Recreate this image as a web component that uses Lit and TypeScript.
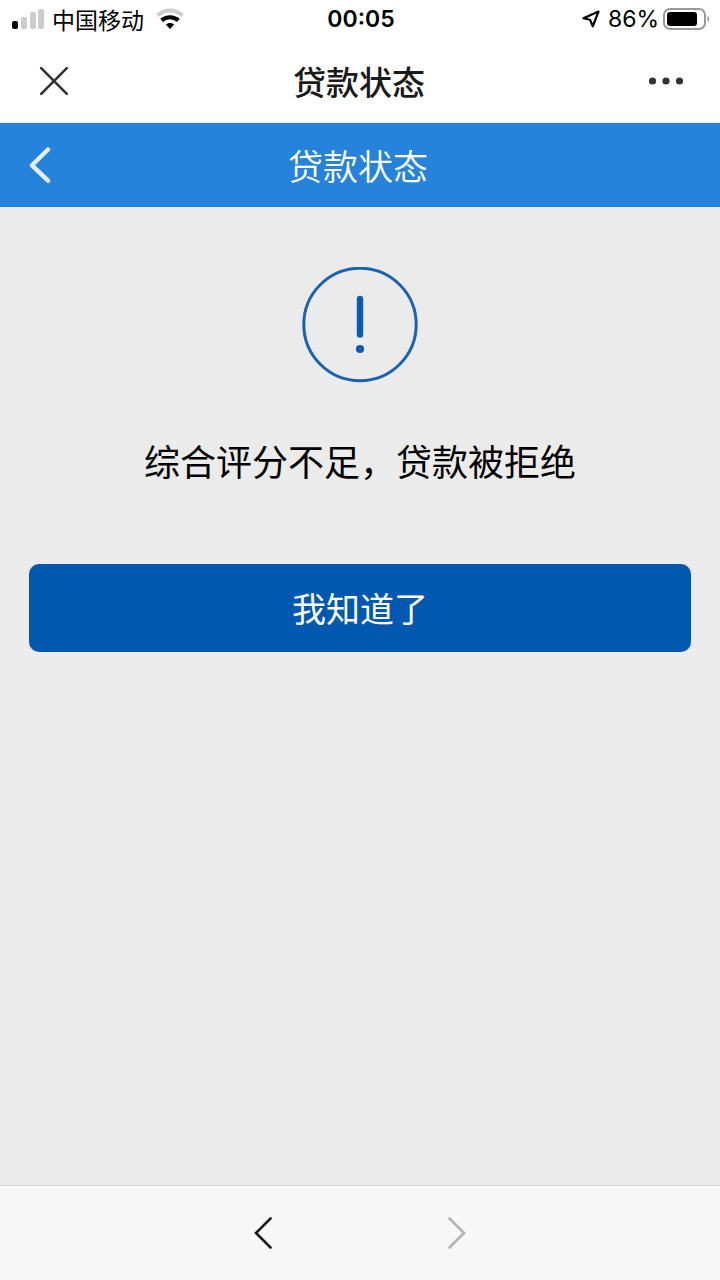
import { LitElement, html, css } from "lit";
import { customElement, property } from "lit/decorators.js";

@customElement("status-bar")
class StatusBar extends LitElement {
  @property() carrier = "";
  @property() time = "";
  @property() battery = "";

  static styles = css`
    :host {
      display: grid;
      grid-template-columns: 1fr auto 1fr;
      align-items: center;
      height: 38px;
      padding: 0 10px 0 12px;
      background: #fff;
      color: #000;
      font-size: 23px;
      line-height: 32px;
    }
    .side {
      display: flex;
      align-items: center;
    }
    .right {
      justify-content: flex-end;
    }
    svg {
      display: block;
      flex: none;
    }
    .carrier {
      margin: 0 12px 0 8px;
    }
    .time {
      font-family: Inter, sans-serif;
      font-weight: 600;
    }
    .level {
      font-family: Inter, sans-serif;
      margin: 0 4px 0 8px;
    }
  `;

  render() {
    return html`
      <div class="side">
        <svg width="32" height="22" viewBox="0 0 32 22" aria-hidden="true">
          <rect x="0" y="13" width="6" height="8" rx="2" fill="#000" />
          <rect x="9" y="9" width="6" height="12" rx="2" fill="#ccc" />
          <rect x="18" y="4" width="6" height="17" rx="2" fill="#ccc" />
          <rect x="26" y="1" width="6" height="20" rx="2" fill="#ccc" />
        </svg>
        <span class="carrier">${this.carrier}</span>
        <svg width="28" height="22" viewBox="0 0 28 22" fill="none" aria-hidden="true">
          <path d="M1.5 7.6C8.7 .8 19.3 .8 26.5 7.6" stroke="#ccc" stroke-width="4" />
          <path d="M5.6 12.4C10.5 8.2 17.5 8.2 22.4 12.4" stroke="#000" stroke-width="4.2" />
          <path d="M9.8 16.6C12.3 14.4 15.7 14.4 18.2 16.6L14 21Z" fill="#000" />
        </svg>
      </div>
      <span class="time">${this.time}</span>
      <div class="side right">
        <svg width="18" height="20" viewBox="0 0 18 20" fill="none" aria-hidden="true">
          <path d="M16.5 2.5L1.5 9.3L8 10.8L10.8 17.3Z" stroke="#000" stroke-width="2.2" stroke-linejoin="round" />
        </svg>
        <span class="level">${this.battery}</span>
        <svg width="47" height="22" viewBox="0 0 47 22" aria-hidden="true">
          <rect x="1" y="1" width="41" height="20" rx="6" fill="none" stroke="#999" stroke-width="2" />
          <rect x="4" y="4" width="30" height="14" rx="3" fill="#000" />
          <path d="M44.5 8C46.8 9 46.8 13 44.5 14Z" fill="#999" />
        </svg>
      </div>
    `;
  }
}

@customElement("app-root")
class AppRoot extends LitElement {
  static styles = css`
    :host {
      display: flex;
      flex-direction: column;
      min-height: 100vh;
      background: #ebebeb;
      font-family: "Noto Sans CJK SC", sans-serif;
    }
    button {
      display: flex;
      align-items: center;
      justify-content: center;
      margin: 0;
      padding: 0;
      border: 0;
      background: none;
      color: inherit;
      font: inherit;
      cursor: pointer;
    }
    svg {
      display: block;
    }
    h1,
    h2,
    p {
      margin: 0;
      text-align: center;
    }
    .bar {
      display: grid;
      grid-template-columns: 80px 1fr 84px;
      align-items: center;
    }
    .bar button {
      height: 80px;
    }
    .window {
      height: 85px;
      padding: 0 12px 0 14px;
      background: #fff;
      color: #1a1a1a;
    }
    .window h1 {
      font-size: 33px;
      font-weight: 500;
      line-height: 48px;
    }
    .page {
      height: 84px;
      background: #2683db;
      color: #fff;
    }
    .page h2 {
      font-size: 35px;
      font-weight: 350;
      line-height: 48px;
    }
    main {
      display: flex;
      flex: 1;
      flex-direction: column;
      align-items: center;
      padding: 60px 29px 48px;
    }
    .message {
      margin: 50px 0 77px;
      color: #000;
      font-size: 36px;
      line-height: 54px;
    }
    main .confirm {
      width: 100%;
      height: 88px;
      padding-bottom: 2px;
      border-radius: 10px;
      background: #0058b1;
      color: #fff;
      font-size: 34px;
    }
    .toolbar {
      display: flex;
      justify-content: center;
      gap: 114px;
      height: 94px;
      border-top: 1px solid #d2d2d2;
      background: #f7f7f7;
      color: #1a1a1a;
    }
    .toolbar button {
      width: 80px;
    }
    .toolbar button:disabled {
      color: #b2b2b2;
      cursor: default;
    }
  `;

  render() {
    return html`
      <status-bar carrier="中国移动" time="00:05" battery="86%"></status-bar>
      <header class="bar window">
        <button type="button" aria-label="关闭">
          <svg width="30" height="30" viewBox="0 0 30 30" fill="none" stroke="#333" stroke-width="2.6" stroke-linecap="round">
            <path d="M2.2 2.2L27.8 27.8M27.8 2.2L2.2 27.8" />
          </svg>
        </button>
        <h1>贷款状态</h1>
        <button type="button" aria-label="更多">
          <svg width="36" height="8" viewBox="0 0 36 8" fill="#333">
            <circle cx="4.5" cy="4" r="3.6" />
            <circle cx="18" cy="4" r="3.6" />
            <circle cx="31.5" cy="4" r="3.6" />
          </svg>
        </button>
      </header>
      <nav class="bar page">
        <button type="button" aria-label="返回">
          <svg width="22" height="36" viewBox="0 0 22 36" fill="none" stroke="#e6eef7" stroke-width="4.4" stroke-linecap="round" stroke-linejoin="round">
            <path d="M19 2.5L3 18.3L19 33.7" />
          </svg>
        </button>
        <h2>贷款状态</h2>
      </nav>
      <main>
        <svg width="116" height="116" viewBox="0 0 116 116" aria-hidden="true">
          <circle cx="58" cy="57.5" r="56.2" fill="none" stroke="#1a62b3" stroke-width="3" />
          <path d="M58 32V67.5" stroke="#0f5bb3" stroke-width="6.4" stroke-linecap="round" />
          <circle cx="58" cy="82" r="4.1" fill="#0f5bb3" />
        </svg>
        <p class="message">综合评分不足，贷款被拒绝</p>
        <button type="button" class="confirm">我知道了</button>
      </main>
      <footer class="toolbar">
        <button type="button" aria-label="后退">
          <svg width="18" height="34" viewBox="0 0 18 34" fill="none" stroke="currentColor" stroke-width="2.6" stroke-linecap="round">
            <path d="M16.5 2.5L2 17L16.5 31.5" />
          </svg>
        </button>
        <button type="button" aria-label="前进" disabled>
          <svg width="18" height="34" viewBox="0 0 18 34" fill="none" stroke="currentColor" stroke-width="2.6" stroke-linecap="round">
            <path d="M1.5 2.5L16 17L1.5 31.5" />
          </svg>
        </button>
      </footer>
    `;
  }
}
